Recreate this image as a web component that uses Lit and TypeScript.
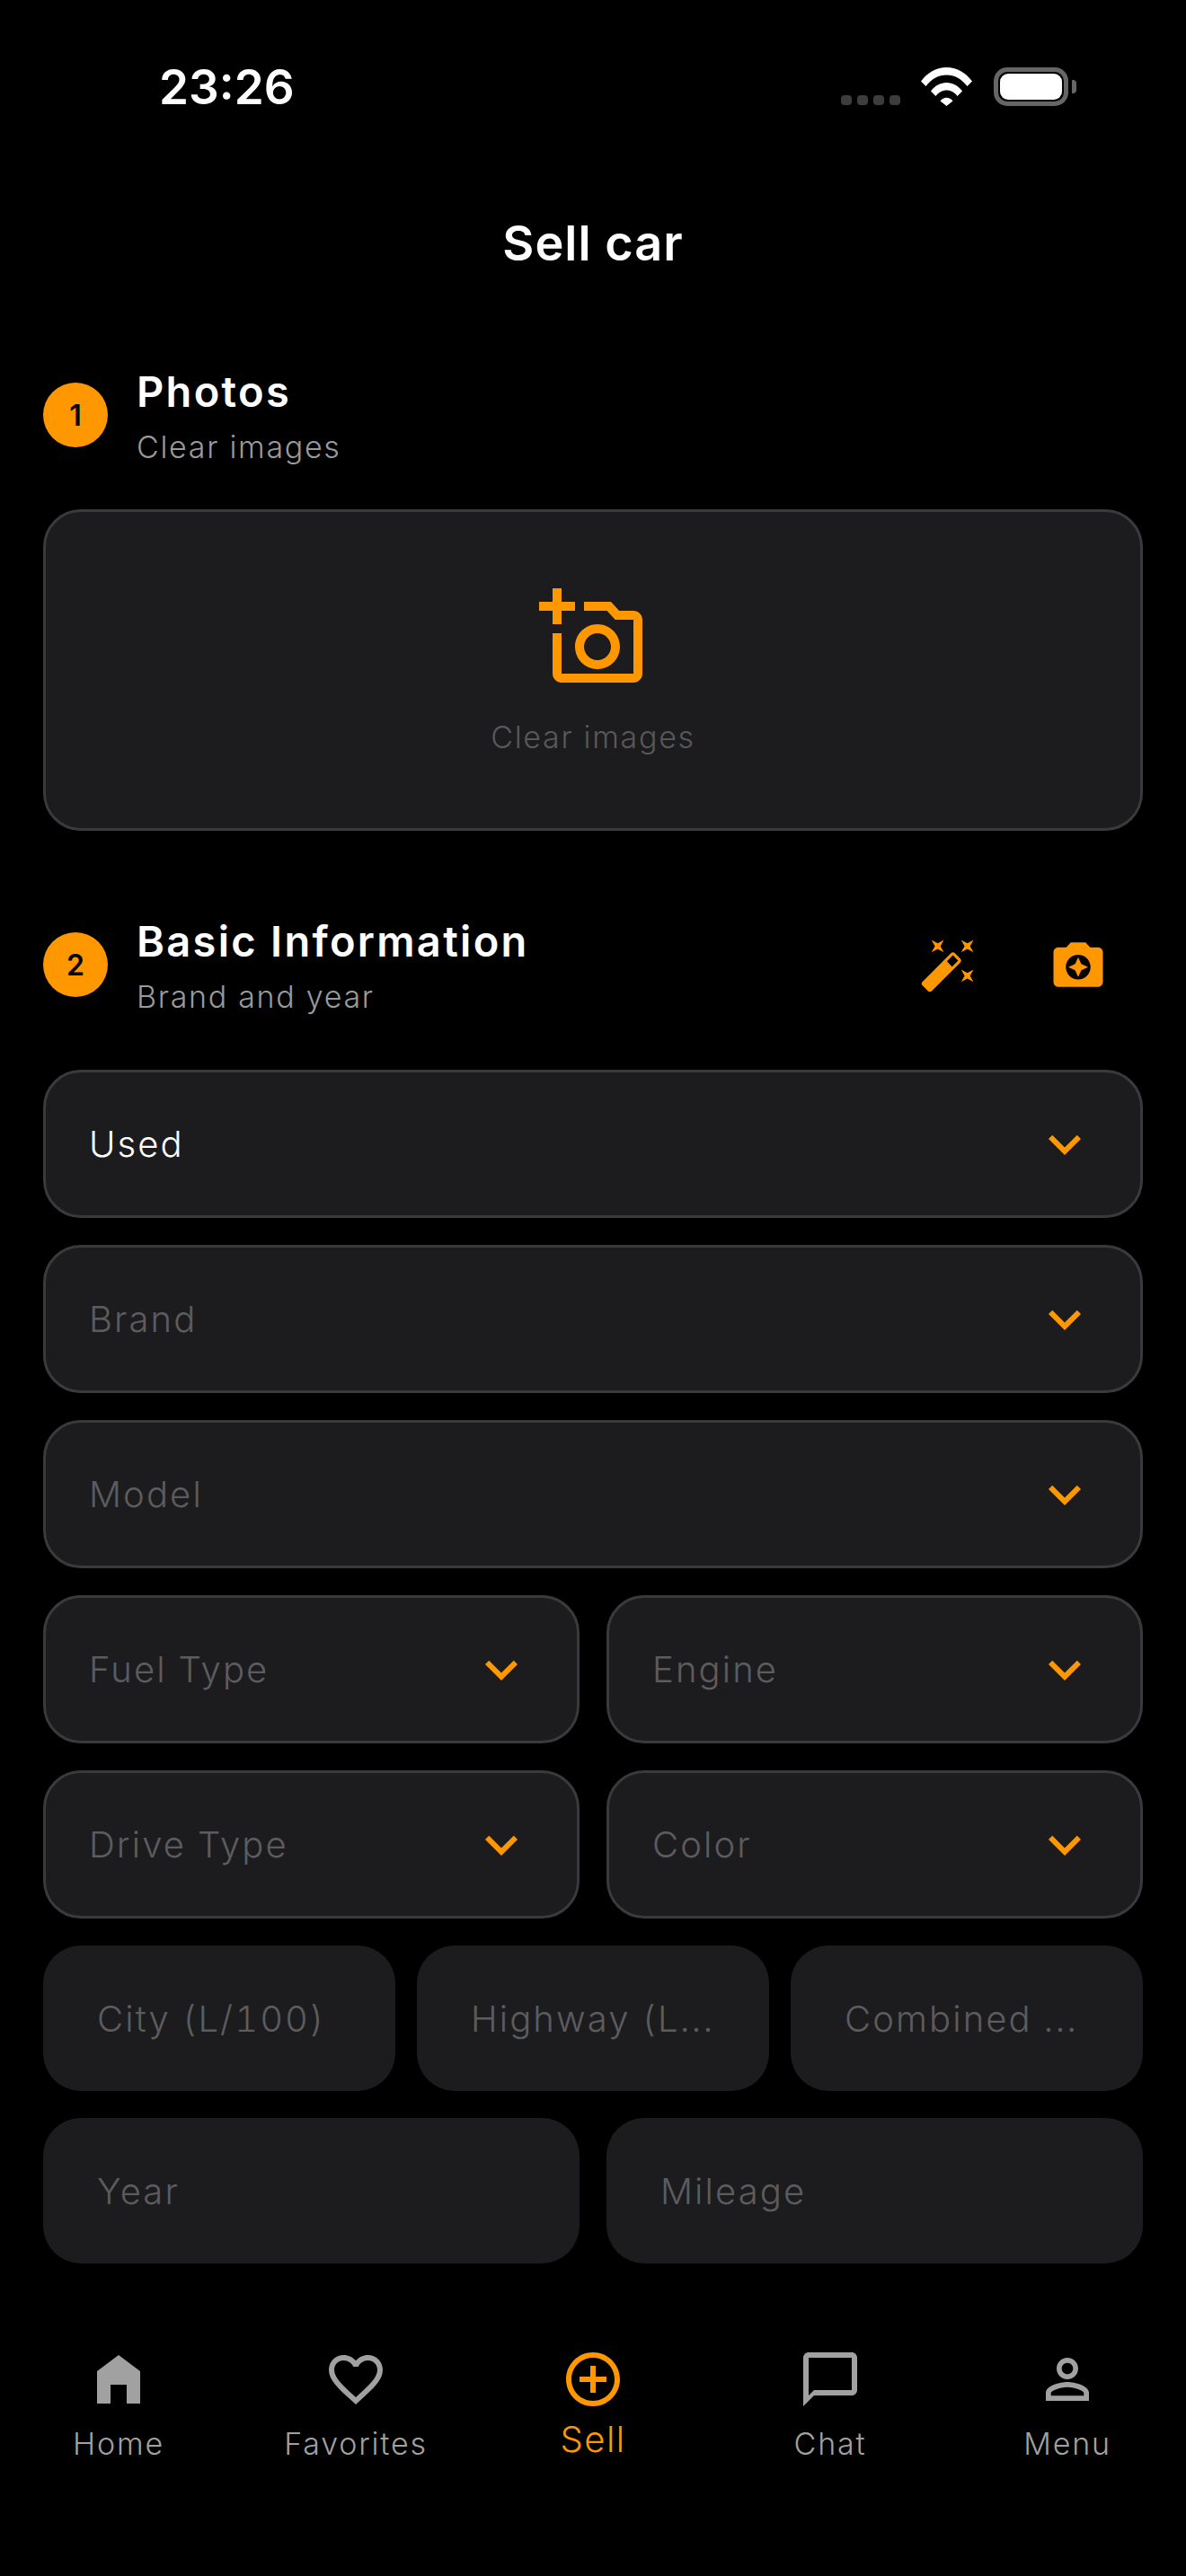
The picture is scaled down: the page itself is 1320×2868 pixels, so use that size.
import { LitElement, html, css, svg } from 'lit';
import { customElement } from 'lit/decorators.js';

const ICONS = {
  home: svg`<path d="M12 3 4 9v12h5v-7h6v7h5V9z"/>`,
  heart: svg`<path d="M16.5 3c-1.74 0-3.41.81-4.5 2.09C10.91 3.81 9.24 3 7.5 3 4.42 3 2 5.42 2 8.5c0 3.78 3.4 6.86 8.55 11.54L12 21.35l1.45-1.32C18.6 15.36 22 12.28 22 8.5 22 5.42 19.58 3 16.5 3zm-4.4 15.55l-.1.1-.1-.1C7.14 14.24 4 11.39 4 8.5 4 6.5 5.5 5 7.5 5c1.54 0 3.04.99 3.57 2.36h1.87C13.46 5.99 14.96 5 16.5 5c2 0 3.5 1.5 3.5 3.5 0 2.89-3.14 5.74-7.9 10.05z"/>`,
  addCircle: svg`<path d="M13 7h-2v4H7v2h4v4h2v-4h4v-2h-4V7zm-1-5C6.48 2 2 6.48 2 12s4.48 10 10 10 10-4.48 10-10S17.52 2 12 2zm0 18c-4.41 0-8-3.59-8-8s3.59-8 8-8 8 3.59 8 8-3.59 8-8 8z"/>`,
  chat: svg`<path d="M20 2H4c-1.1 0-2 .9-2 2v18l4-4h14c1.1 0 2-.9 2-2V4c0-1.1-.9-2-2-2zm0 14H6l-2 2V4h16v12z"/>`,
  person: svg`<path d="M12 5.9c1.16 0 2.1.94 2.1 2.1s-.94 2.1-2.1 2.1S9.9 9.16 9.9 8s.94-2.1 2.1-2.1m0 9c2.97 0 6.1 1.46 6.1 2.1v1.1H5.9V17c0-.64 3.13-2.1 6.1-2.1M12 4C9.79 4 8 5.79 8 8s1.79 4 4 4 4-1.79 4-4-1.79-4-4-4zm0 9c-2.67 0-8 1.34-8 4v3h16v-3c0-2.66-5.33-4-8-4z"/>`,
  addPhoto: svg`<path d="M21 6h-3.17L16 4h-6v2h5.12l1.83 2H21v12H5v-9H3v9c0 1.1.9 2 2 2h16c1.1 0 2-.9 2-2V8c0-1.1-.9-2-2-2zM8 14c0 2.76 2.24 5 5 5s5-2.24 5-5-2.24-5-5-5-5 2.24-5 5zm5-3c1.65 0 3 1.35 3 3s-1.35 3-3 3-3-1.35-3-3 1.35-3 3-3zM3 1h2v3h3v2H5v3H3V6H0V4h3z"/>`,
  wand: svg`<path d="M7.5 5.6 10 7 8.6 4.5 10 2 7.5 3.4 5 2l1.4 2.5L5 7zm12 9.8L17 14l1.4 2.5L17 19l2.5-1.4L22 19l-1.4-2.5L22 14zM22 2l-2.5 1.4L17 2l1.4 2.5L17 7l2.5-1.4L22 7l-1.4-2.5zm-7.63 5.29c-.39-.39-1.02-.39-1.41 0L1.29 18.96c-.39.39-.39 1.02 0 1.41l2.34 2.34c.39.39 1.02.39 1.41 0L16.7 11.05c.39-.39.39-1.02 0-1.41l-2.33-2.35zm-1.03 5.49l-2.12-2.12 2.44-2.44 2.12 2.12-2.44 2.44z"/>`,
  cameraEnhance: svg`<path d="M9 3 7.17 5H4c-1.1 0-2 .9-2 2v12c0 1.1.9 2 2 2h16c1.1 0 2-.9 2-2V7c0-1.1-.9-2-2-2h-3.17L15 3H9zm3 15c-2.76 0-5-2.24-5-5s2.24-5 5-5 5 2.24 5 5-2.24 5-5 5zm0-1 1.25-2.75L16 13l-2.75-1.25L12 9l-1.25 2.75L8 13l2.75 1.25z"/>`,
  chevron: svg`<path d="M7.41 8.59 12 13.17l4.59-4.58L18 10l-6 6-6-6 1.41-1.41z"/>`,
};

const icon = (name: keyof typeof ICONS, cls = '') =>
  html`<svg class="icon ${cls}" viewBox="0 0 24 24" fill="currentColor">${ICONS[name]}</svg>`;

@customElement('app-root')
export class AppRoot extends LitElement {
  static styles = css`
    :host {
      display: block;
      width: 1320px;
      height: 2868px;
      background: #000;
      color: #fff;
      font-family: Inter, 'Noto Sans', sans-serif;
      overflow: hidden;
    }
    .status {
      height: 162px;
      box-sizing: border-box;
      padding: 71px 131px 0 177px;
      display: flex;
      align-items: flex-start;
      justify-content: space-between;
    }
    .time {
      font-size: 53px;
      line-height: 52px;
      font-weight: 600;
    }
    .status-right {
      display: flex;
      align-items: flex-start;
      margin-top: 4px;
    }
    .dots {
      display: flex;
      gap: 6px;
      margin: 31px 23px 0 0;
    }
    .dots span {
      width: 12px;
      height: 11px;
      border-radius: 4px;
      background: #3d3d3d;
    }
    .wifi {
      width: 57px;
      height: 43px;
      margin-right: 24px;
    }
    .battery {
      width: 83px;
      height: 43px;
      box-sizing: border-box;
      border: 5px solid #666;
      border-radius: 15px;
      padding: 2px;
      position: relative;
    }
    .battery::before {
      content: '';
      display: block;
      height: 100%;
      border-radius: 9px;
      background: #fff;
    }
    .battery::after {
      content: '';
      position: absolute;
      right: -14px;
      top: 9px;
      width: 5px;
      height: 15px;
      border-radius: 0 4px 4px 0;
      background: #666;
    }
    .appbar {
      height: 216px;
      display: flex;
      align-items: center;
      justify-content: center;
      font-size: 54px;
      font-weight: 600;
      letter-spacing: 1px;
    }
    .content {
      padding: 24px 48px 0;
    }
    .head {
      display: flex;
      align-items: center;
      margin-bottom: 45px;
    }
    .step {
      width: 72px;
      height: 72px;
      flex: none;
      border-radius: 50%;
      background: #ff9800;
      color: #000;
      display: flex;
      align-items: center;
      justify-content: center;
      font-size: 32px;
      font-weight: 600;
    }
    .head-text {
      flex: 1;
      margin-left: 32px;
      height: 120px;
      box-sizing: border-box;
      padding-top: 2px;
    }
    .head-title {
      font-size: 47px;
      line-height: 64px;
      font-weight: 600;
      letter-spacing: 2.3px;
    }
    .head-sub {
      margin-top: 2px;
      font-size: 34px;
      line-height: 56px;
      font-weight: 350;
      color: #9a9a9a;
      letter-spacing: 1.7px;
    }
    .head-btn {
      width: 144px;
      height: 144px;
      flex: none;
      display: flex;
      align-items: center;
      justify-content: center;
      color: #ff9800;
    }
    .head-btn .icon {
      width: 66px;
      height: 66px;
    }
    .upload {
      height: 358px;
      box-sizing: border-box;
      border: 3px solid #3a3a3c;
      border-radius: 42px;
      background: #1c1c1e;
      display: flex;
      flex-direction: column;
      align-items: center;
      margin-bottom: 77px;
      padding-top: 80px;
      color: #ff9800;
    }
    .upload .icon {
      width: 120px;
      height: 120px;
    }
    .upload-label {
      margin-top: 29px;
      font-size: 34px;
      line-height: 44px;
      font-weight: 350;
      color: #58585a;
      letter-spacing: 1.7px;
    }
    .form {
      display: flex;
      flex-direction: column;
      gap: 30px;
    }
    .row {
      display: grid;
      grid-template-columns: 1fr 1fr;
      gap: 30px;
    }
    .row.three {
      grid-template-columns: 1fr 1fr 1fr;
      gap: 24px;
    }
    .select {
      height: 165px;
      box-sizing: border-box;
      border: 3px solid #3a3a3c;
      border-radius: 42px;
      background: #1c1c1e;
      display: flex;
      align-items: center;
      justify-content: space-between;
      padding: 0 48px;
      min-width: 0;
    }
    .input {
      height: 162px;
      box-sizing: border-box;
      border-radius: 42px;
      background: #1c1c1e;
      display: flex;
      align-items: center;
      padding: 0 60px;
      min-width: 0;
    }
    .label {
      font-size: 40px;
      font-weight: 350;
      letter-spacing: 2.1px;
      font-variant-numeric: tabular-nums;
      color: #5c5c5e;
      white-space: nowrap;
    }
    .label.filled {
      color: #fff;
    }
    .select .icon {
      width: 72px;
      height: 72px;
      flex: none;
      color: #ff9800;
    }
    .nav {
      margin-top: 93px;
      display: grid;
      grid-template-columns: repeat(5, 1fr);
    }
    .tab {
      display: flex;
      flex-direction: column;
      align-items: center;
      color: #a1a1a1;
    }
    .tab .icon {
      width: 72px;
      height: 72px;
    }
    .tab-label {
      margin-top: 14px;
      font-size: 34px;
      line-height: 44px;
      font-weight: 350;
      letter-spacing: 1.8px;
    }
    .tab.active {
      color: #ff9800;
    }
    .tab.active .tab-label {
      margin-top: 6px;
      font-size: 40px;
      line-height: 50px;
      letter-spacing: 1.5px;
    }
  `;

  private _select(label: string, filled = false) {
    return html`<div class="select">
      <span class="label ${filled ? 'filled' : ''}">${label}</span>
      ${icon('chevron')}
    </div>`;
  }

  private _input(label: string) {
    return html`<div class="input"><span class="label">${label}</span></div>`;
  }

  private _tab(name: keyof typeof ICONS, label: string, active = false) {
    return html`<div class="tab ${active ? 'active' : ''}">
      ${icon(name)}
      <span class="tab-label">${label}</span>
    </div>`;
  }

  protected render() {
    return html`
      <div class="status">
        <div class="time">23:26</div>
        <div class="status-right">
          <div class="dots"><span></span><span></span><span></span><span></span></div>
          <svg class="wifi" viewBox="0 0 57 43" fill="#fff">
            <path d="M0 15.5C7.5 5.5 17.5 0 28.5 0S49.5 5.5 57 15.5L51.5 21C45.5 13 37.5 8.5 28.5 8.5S11.5 13 5.5 21z" />
            <path d="M11 26.5C15.5 20.5 21.5 17 28.5 17S41.5 20.5 46 26.5L40.5 32C37.5 28 33.5 25.5 28.5 25.5S19.5 28 16.5 32z" />
            <path d="M21.5 37.5C23.5 35 25.8 33.8 28.5 33.8S33.5 35 35.5 37.5L28.5 43z" />
          </svg>
          <div class="battery"></div>
        </div>
      </div>
      <div class="appbar">Sell car</div>
      <div class="content">
        <div class="head">
          <div class="step">1</div>
          <div class="head-text">
            <div class="head-title">Photos</div>
            <div class="head-sub">Clear images</div>
          </div>
        </div>
        <div class="upload">
          ${icon('addPhoto')}
          <div class="upload-label">Clear images</div>
        </div>
        <div class="head">
          <div class="step">2</div>
          <div class="head-text">
            <div class="head-title">Basic Information</div>
            <div class="head-sub">Brand and year</div>
          </div>
          <div class="head-btn">${icon('wand')}</div>
          <div class="head-btn">${icon('cameraEnhance')}</div>
        </div>
        <div class="form">
          ${this._select('Used', true)}
          ${this._select('Brand')}
          ${this._select('Model')}
          <div class="row">${this._select('Fuel Type')}${this._select('Engine')}</div>
          <div class="row">${this._select('Drive Type')}${this._select('Color')}</div>
          <div class="row three">
            ${this._input('City (L/100)')}${this._input('Highway (L...')}${this._input('Combined ...')}
          </div>
          <div class="row">${this._input('Year')}${this._input('Mileage')}</div>
        </div>
      </div>
      <div class="nav">
        ${this._tab('home', 'Home')}
        ${this._tab('heart', 'Favorites')}
        ${this._tab('addCircle', 'Sell', true)}
        ${this._tab('chat', 'Chat')}
        ${this._tab('person', 'Menu')}
      </div>
    `;
  }
}
